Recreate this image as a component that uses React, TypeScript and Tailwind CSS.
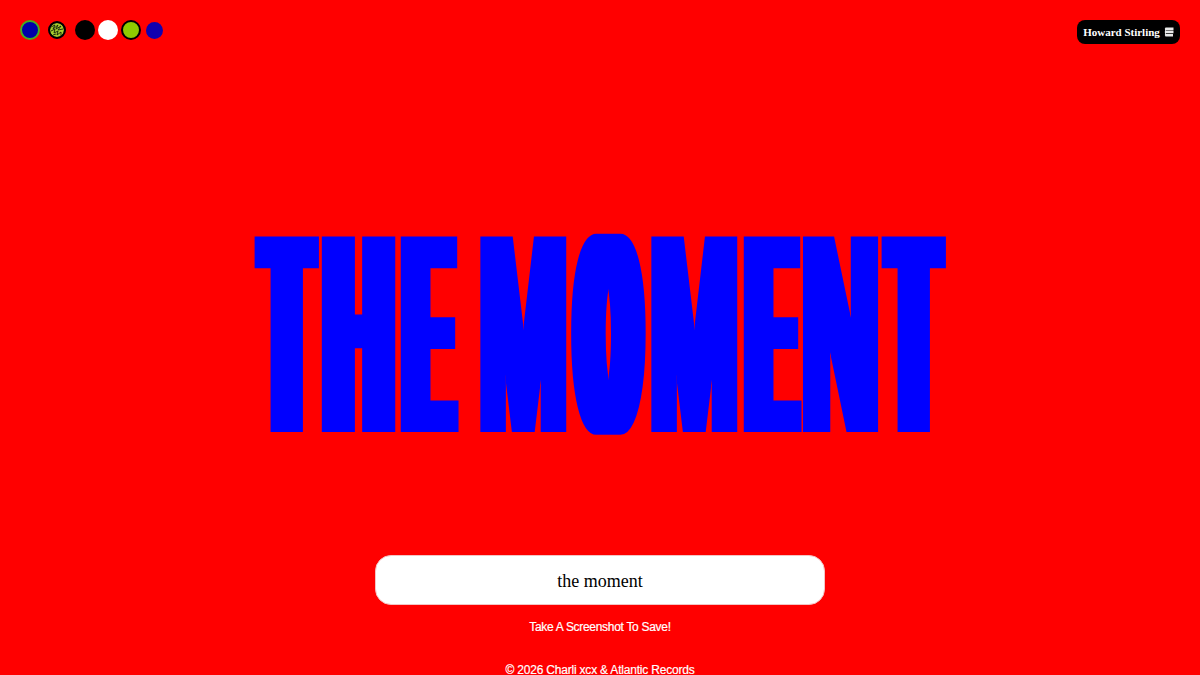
const letters = [
  { c: "T", box: "w-[63px]", fx: "[filter:url(#thick11)]", glyph: "[transform:scaleX(.253)]" },
  { c: "H", box: "w-[73px] ml-[4px]", fx: "[filter:url(#thick10)]", glyph: "[transform:scaleX(.32)]" },
  { c: "E", box: "w-[57px] ml-[5px]", fx: "[filter:url(#thick10)]", glyph: "[transform:scaleX(.237)]" },
  { c: " ", box: "w-[24px]", fx: "", glyph: "" },
  { c: "M", box: "w-[85px]", fx: "[filter:url(#thick6)]", glyph: "[transform:scaleX(.372)]" },
  { c: "O", box: "w-[75px] ml-[5px]", fx: "[filter:url(#thick12)]", glyph: "[transform:scaleX(.256)]" },
  { c: "M", box: "w-[85px] ml-[6px]", fx: "[filter:url(#thick6)]", glyph: "[transform:scaleX(.372)]" },
  { c: "E", box: "w-[57px] ml-[6px]", fx: "[filter:url(#thick10)]", glyph: "[transform:scaleX(.237)]" },
  { c: "N", box: "w-[74px] ml-[4px]", fx: "[filter:url(#thick7)]", glyph: "[transform:scaleX(.366)]" },
  { c: "T", box: "w-[63px] ml-[4px]", fx: "[filter:url(#thick11)]", glyph: "[transform:scaleX(.253)]" },
];

const radii = [6, 7, 10, 11, 12];

export default function App() {
  return (
    <div className="h-[675px] overflow-hidden bg-[#ff0000] flex flex-col font-['Liberation_Sans',sans-serif]">
      <svg className="w-0 h-0 shrink-0" aria-hidden="true">
        {radii.map((r) => (
          <filter key={r} id={`thick${r}`} x="-50%" y="-20%" width="200%" height="140%" colorInterpolationFilters="sRGB">
            <feMorphology operator="dilate" radius={`${r} 0`} />
          </filter>
        ))}
      </svg>

      <header className="shrink-0 flex items-start justify-between pt-5 pl-5 pr-5">
        <div className="flex items-center h-5">
          <div className="w-5 h-5 rounded-full bg-[#0000a8] border-2 border-[#46b020]" />
          <div className="w-[18px] h-[18px] ml-[8px] rounded-full border-2 border-black bg-black overflow-hidden">
            <svg viewBox="0 0 14 14" className="w-full h-full">
              <circle cx="7" cy="7" r="7" fill="#a6cc2e" />
              <path d="M1 4 L5 2 L3 6 L8 2 L6 6 L11 3 L8 7 L13 6 M1 8 L5 6 L4 10 L8 8 L7 12 L11 9 L11 13 M3 12 L6 11" stroke="#14200a" strokeWidth="0.9" fill="none" />
            </svg>
          </div>
          <div className="w-5 h-5 ml-[9px] rounded-full bg-black" />
          <div className="w-5 h-5 ml-[3px] rounded-full bg-white" />
          <div className="w-5 h-5 ml-[3px] rounded-full bg-[#8fcc00] border-2 border-black" />
          <div className="w-[17px] h-[17px] ml-[5px] rounded-full bg-[#1000b0]" />
        </div>
        <div className="h-6 w-[103px] rounded-lg bg-black text-white flex items-center justify-center gap-[4px] font-['Liberation_Serif',serif] font-bold text-[11px]">
          <span>Howard Stirling</span>
          <svg viewBox="0 0 10 10" className="w-[10px] h-[10px]">
            <path d="M1.5 0.5 H9.5 V3 H2 V3.6 H9.5 V6.2 H2 V6.9 H9 V9.5 H1.5 Q0.3 8.2 1.2 6.6 Q0.2 5 1.2 3.4 Q0.3 1.8 1.5 0.5 Z" fill="#e8e8e8" />
          </svg>
        </div>
      </header>

      <main className="flex-1 flex flex-col items-center min-h-0">
        <h1 className="shrink-0 mt-[193px] h-[194px] flex justify-center text-[#0000ff] font-bold text-[284px] leading-[194px]">
          {letters.map((l, i) => (
            <span key={i} className={`flex justify-center ${l.box} ${l.fx}`}>
              <span className={`inline-block whitespace-pre ${l.glyph}`}>{l.c}</span>
            </span>
          ))}
        </h1>
        <input
          readOnly
          value="the moment"
          className="shrink-0 mt-[124px] w-[450px] h-[50px] pt-[2px] rounded-2xl bg-white border border-[#f3c4c4] text-center text-black text-[18px] font-['Liberation_Serif',serif] outline-none"
        />
        <p className="shrink-0 mt-[14px] text-white text-[12px] leading-[16px] tracking-[-0.3px] [-webkit-text-stroke:0.2px_white]">Take A Screenshot To Save!</p>
        <p className="shrink-0 mt-[27px] text-white text-[12px] leading-[16px] tracking-[-0.2px] [-webkit-text-stroke:0.2px_white]">© 2026 Charli xcx &amp; Atlantic Records</p>
      </main>
    </div>
  );
}
